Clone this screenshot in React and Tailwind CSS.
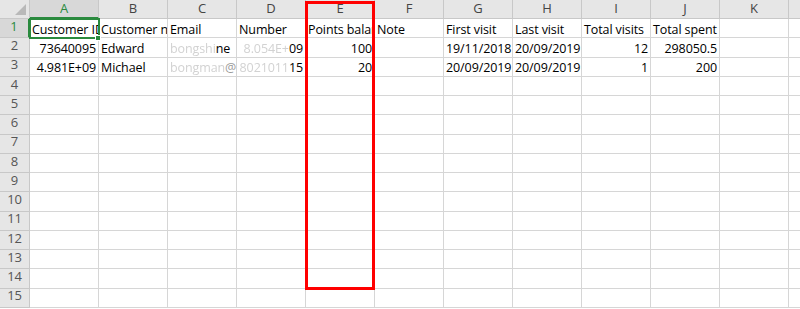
import React from 'react';

const COLS = ['A', 'B', 'C', 'D', 'E', 'F', 'G', 'H', 'I', 'J', 'K'];

const Faded = ({ children }) => (
  <span className="text-[#d2d2d2] blur-[0.4px]">{children}</span>
);

const rows = [
  [
    { t: 'Customer ID' },
    { t: 'Customer name' },
    { t: 'Email' },
    { t: 'Number' },
    { t: 'Points balance' },
    { t: 'Note' },
    { t: 'First visit' },
    { t: 'Last visit' },
    { t: 'Total visits' },
    { t: 'Total spent' },
  ],
  [
    { t: '73640095', r: true },
    { t: 'Edward' },
    { n: <><Faded>bongshi</Faded>ne</> },
    { n: <><Faded>8.054E+</Faded>09</>, r: true },
    { t: '100', r: true },
    { t: '' },
    { t: '19/11/2018' },
    { t: '20/09/2019' },
    { t: '12', r: true },
    { t: '298050.5', r: true },
  ],
  [
    { t: '4.981E+09', r: true },
    { t: 'Michael' },
    { n: <><Faded>bongman</Faded><span className="text-[#9a9a9a]">@</span></> },
    { n: <><Faded>8021011</Faded>15</>, r: true },
    { t: '20', r: true },
    { t: '' },
    { t: '20/09/2019' },
    { t: '20/09/2019' },
    { t: '1', r: true },
    { t: '200', r: true },
  ],
];

export default function App() {
  return (
    <div className="relative w-[800px] h-[309px] overflow-hidden bg-white" style={{ fontFamily: '"Open Sans", "Liberation Sans", sans-serif' }}>
      <div className="grid grid-cols-[30px_repeat(11,69px)_1fr] grid-rows-[19px_repeat(15,19.25px)] text-[12.5px] tracking-[-0.1px] text-black">
        {/* corner */}
        <div className="relative bg-[#e6e6e6] border-r border-b border-[#c8c8c8]">
          <div className="absolute right-[3px] bottom-[3px] w-0 h-0 border-l-[11px] border-l-transparent border-b-[11px] border-b-[#b9b9b9]" />
        </div>
        {COLS.map((c, i) => (
          <div
            key={c}
            className={
              i === 0
                ? 'flex items-center justify-center bg-[#d8d8d8] border-r border-[#c8c8c8] border-b-2 border-b-[#2a8a3e] text-[#2a8a3e] text-[13px]'
                : 'flex items-center justify-center bg-[#e6e6e6] border-r border-b border-[#c8c8c8] text-[#444] text-[13px]'
            }
          >
            {c}
          </div>
        ))}
        <div className="bg-[#e6e6e6] border-b border-[#c8c8c8]" />

        {Array.from({ length: 15 }).map((_, ri) => (
          <React.Fragment key={ri}>
            <div
              className={
                ri === 0
                  ? 'flex items-end justify-center pb-px bg-[#d8d8d8] border-b border-[#c8c8c8] border-r-2 border-r-[#2a8a3e] text-[#2a8a3e] text-[13px]'
                  : 'flex items-end justify-center pb-px bg-[#e6e6e6] border-r border-b border-[#c8c8c8] text-[#555] text-[13px]'
              }
            >
              {ri + 1}
            </div>
            {COLS.map((c, ci) => {
              const cell = rows[ri] && rows[ri][ci];
              return (
                <div
                  key={c}
                  className={
                    'relative flex items-end overflow-hidden whitespace-nowrap border-r border-b border-[#d6d6d6] px-[2px] pb-[1px] leading-none ' +
                    (cell && cell.r ? 'justify-end' : 'justify-start')
                  }
                >
                  {cell ? cell.n || cell.t : null}
                </div>
              );
            })}
            <div className="border-b border-[#d6d6d6]" />
          </React.Fragment>
        ))}
      </div>

      {/* A1 selection */}
      <div className="absolute left-[29px] top-[18px] w-[71px] h-[21px] border-2 border-[#2a8a3e]" />
      <div className="absolute left-[95px] top-[35px] w-[6px] h-[6px] bg-[#2a8a3e] border border-white" />

      {/* highlight box around column E */}
      <div className="absolute left-[305px] top-[1px] w-[70px] h-[289px] border-[3px] border-[#ff0000]" />
    </div>
  );
}
